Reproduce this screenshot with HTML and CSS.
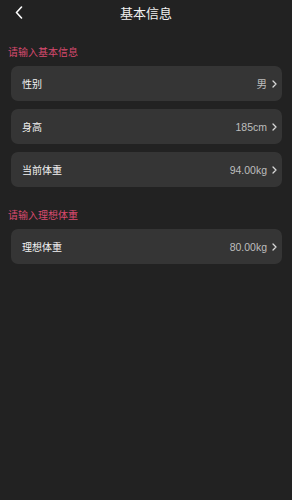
FILE: index.html
```html
<!DOCTYPE html>
<html lang="zh-CN">
<head>
    <meta charset="UTF-8">
    <meta name="viewport" content="width=device-width, initial-scale=1.0">
    <title>基本信息</title>
    <link rel="stylesheet" href="styles.css">
</head>
<body>
    <div class="page">
        <!-- Header -->
        <div class="header">
            <span class="back">
                <svg width="8" height="13" viewBox="0 0 8 13"><path d="M6.5 1 L1.5 6.5 L6.5 12" fill="none" stroke="#ffffff" stroke-width="1.6" stroke-linecap="round" stroke-linejoin="round"/></svg>
            </span>
            <h1>基本信息</h1>
        </div>

        <div class="section-title">请输入基本信息</div>
        <div class="list">
            <div class="row">
                <span class="label">性别</span>
                <span class="value">男</span>
                <svg class="arrow" width="5" height="8" viewBox="0 0 5 8"><path d="M1 1 L4 4 L1 7" fill="none" stroke="#d8d8d8" stroke-width="1.3" stroke-linecap="round" stroke-linejoin="round"/></svg>
            </div>
            <div class="row">
                <span class="label">身高</span>
                <span class="value">185cm</span>
                <svg class="arrow" width="5" height="8" viewBox="0 0 5 8"><path d="M1 1 L4 4 L1 7" fill="none" stroke="#d8d8d8" stroke-width="1.3" stroke-linecap="round" stroke-linejoin="round"/></svg>
            </div>
            <div class="row">
                <span class="label">当前体重</span>
                <span class="value">94.00kg</span>
                <svg class="arrow" width="5" height="8" viewBox="0 0 5 8"><path d="M1 1 L4 4 L1 7" fill="none" stroke="#d8d8d8" stroke-width="1.3" stroke-linecap="round" stroke-linejoin="round"/></svg>
            </div>
        </div>

        <div class="section-title second">请输入理想体重</div>
        <div class="list">
            <div class="row">
                <span class="label">理想体重</span>
                <span class="value">80.00kg</span>
                <svg class="arrow" width="5" height="8" viewBox="0 0 5 8"><path d="M1 1 L4 4 L1 7" fill="none" stroke="#d8d8d8" stroke-width="1.3" stroke-linecap="round" stroke-linejoin="round"/></svg>
            </div>
        </div>
    </div>
</body>
</html>
```

FILE: styles.css
```css
body {
    margin: 0;
    padding: 0;
    font-family: "Noto Sans CJK SC", "Noto Sans", sans-serif;
    background-color: #222222;
    color: #ffffff;
}

.page {
    height: 500px;
    background-color: #222222;
}

.header {
    position: relative;
    height: 26px;
    display: flex;
    align-items: center;
    justify-content: center;
}

.header h1 {
    margin: 0;
    font-size: 13px;
    font-weight: normal;
    color: #f0f0f0;
    line-height: 26px;
}

.back {
    position: absolute;
    left: 15px;
    top: 6px;
    display: flex;
}

.section-title {
    margin: 19px 0 0 8px;
    font-size: 10px;
    line-height: 14px;
    color: #d94a6f;
}

.section-title.second {
    margin-top: 21px;
}

.list {
    display: flex;
    flex-direction: column;
    gap: 8px;
    margin: 7px 10px 0 11px;
}

.row {
    display: flex;
    align-items: center;
    height: 35px;
    padding: 0 5px 0 11px;
    background-color: #353535;
    border-radius: 7px;
}

.label {
    flex: 1;
    font-size: 10px;
    color: #f2f2f2;
}

.value {
    font-size: 10.5px;
    color: #bdbdbd;
    font-family: "Liberation Sans", "Noto Sans CJK SC", sans-serif;
}

.arrow {
    margin-left: 5px;
}
```
